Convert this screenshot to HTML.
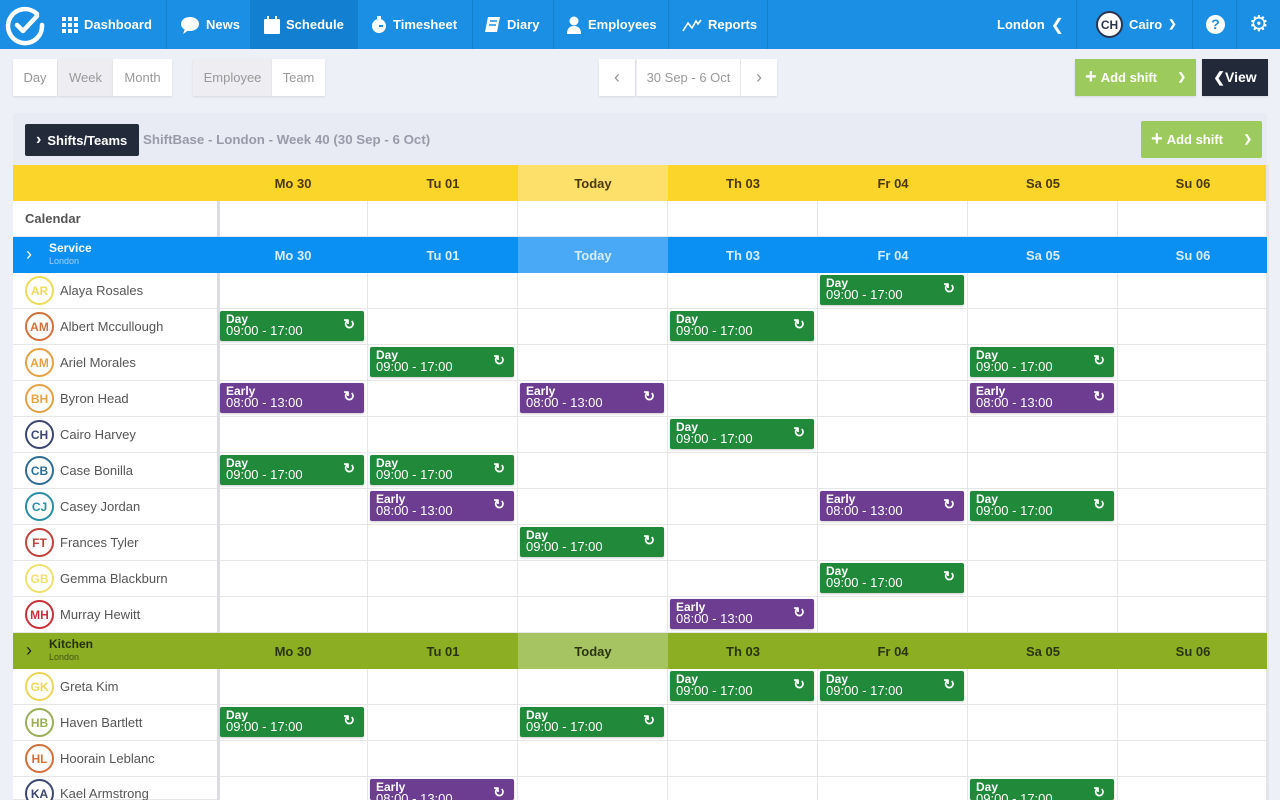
<!DOCTYPE html>
<html style="overflow:hidden;width:1280px;height:800px"><head><meta charset="utf-8">
<style>
*{box-sizing:border-box;margin:0;padding:0}
html,body{overflow:hidden}
body{width:1280px;height:800px;overflow:hidden;background:#eef0f7;font-family:"Liberation Sans",sans-serif;position:relative}
.a{position:absolute}
.nav{left:0;top:0;width:1280px;height:49px;background:#1a8fe3}
.ni{position:absolute;top:0;height:49px;display:flex;align-items:center;color:#fff;font-size:13px;font-weight:bold;gap:6px}
.sep{position:absolute;top:0;width:1px;height:49px;background:#1580d0}
.btn{position:absolute;top:59px;height:37px;background:#fff;display:flex;align-items:center;justify-content:center;color:#999;font-size:13px;box-shadow:0 1px 2px rgba(0,0,0,.1)}
.hd{position:absolute;display:flex;align-items:center;justify-content:center;font-size:13px;font-weight:bold}
.nm{position:absolute;left:13px;width:204px;height:36px;background:#fff;border-bottom:1px solid #e6e6e6;display:flex;align-items:center;padding-left:12px;font-size:13px;color:#555}
.av{width:29px;height:29px;border-radius:50%;border:2px solid;display:flex;align-items:center;justify-content:center;font-size:12px;font-weight:bold;margin-right:6px;background:#fff}
.s{position:absolute;width:144px;height:30px;border-radius:2px;color:#fff;padding:2px 6px;font-size:13px;line-height:12px;box-shadow:0 1px 2px rgba(0,0,0,.2)}
.s b{display:block;font-size:12px}
.s i{position:absolute;right:9px;top:7px;font-style:normal;font-size:14px;font-weight:bold}
.g{background:#218a3a}.p{background:#6d3d92}
</style></head><body>
<div class="a nav"></div>
<svg class="a" style="left:4px;top:4px" width="42" height="42" viewBox="0 0 42 42"><path d="M33 10A17 17 0 1 0 38 21" fill="none" stroke="#fff" stroke-width="4.5" stroke-linecap="round"/><path d="M13 21l6 6 14-15" fill="none" stroke="#fff" stroke-width="4.5" stroke-linecap="round" stroke-linejoin="round"/></svg>
<div class="ni" style="left:62px"><span style="display:inline-grid;grid-template-columns:repeat(3,4px);gap:2px"><i style="background:#fff;height:4px"></i><i style="background:#fff;height:4px"></i><i style="background:#fff;height:4px"></i><i style="background:#fff;height:4px"></i><i style="background:#fff;height:4px"></i><i style="background:#fff;height:4px"></i><i style="background:#fff;height:4px"></i><i style="background:#fff;height:4px"></i><i style="background:#fff;height:4px"></i></span>Dashboard</div>
<div class="sep" style="left:166px"></div>
<div class="ni" style="left:180px"><svg width="20" height="18"><ellipse cx="10" cy="8" rx="9" ry="7" fill="#fff"/><path d="M5 13l-2 5 6-4z" fill="#fff"/></svg>News</div>
<div class="a" style="left:250px;top:0;width:108px;height:49px;background:#137fd1"></div>
<div class="ni" style="left:264px"><svg width="16" height="18"><rect x="0" y="3" width="16" height="15" rx="1" fill="#fff"/><rect x="3" y="0" width="2" height="4" fill="#fff"/><rect x="11" y="0" width="2" height="4" fill="#fff"/></svg>Schedule</div>
<div class="ni" style="left:371px"><svg width="16" height="18"><circle cx="8" cy="10" r="7" fill="#fff"/><rect x="6" y="0" width="4" height="3" fill="#fff"/><path d="M8 10h4" stroke="#1a8fe3" stroke-width="2"/></svg>Timesheet</div>
<div class="sep" style="left:472px"></div>
<div class="ni" style="left:485px"><svg width="16" height="17"><path d="M3 1h12l-3 15H0z" fill="#fff"/><path d="M5 5h7M4 9h7" stroke="#1a8fe3" stroke-width="1.5"/></svg>Diary</div>
<div class="sep" style="left:553px"></div>
<div class="ni" style="left:566px"><svg width="16" height="18"><circle cx="8" cy="5" r="4.5" fill="#fff"/><path d="M1 18c0-6 3-8 7-8s7 2 7 8z" fill="#fff"/></svg>Employees</div>
<div class="sep" style="left:668px"></div>
<div class="ni" style="left:682px"><svg width="20" height="14"><path d="M1 13l5-8 4 5 4-7 2 3 3-4" fill="none" stroke="#fff" stroke-width="1.6"/></svg>Reports</div>
<div class="sep" style="left:767px"></div>
<div class="ni" style="left:997px">London <span style="font-size:16px;font-weight:normal">&#10094;</span></div>
<div class="sep" style="left:1076px"></div>
<div class="ni" style="left:1096px"><span style="width:27px;height:27px;border-radius:50%;background:#fff;border:2px solid #2a3550;color:#2a3550;font-size:12px;display:flex;align-items:center;justify-content:center">CH</span>Cairo <span style="font-size:10px">&#10095;</span></div>
<div class="sep" style="left:1192px"></div>
<div class="a" style="left:1206px;top:15px;width:19px;height:19px;border-radius:50%;background:#fff;color:#1a8fe3;font-size:14px;font-weight:bold;text-align:center;line-height:19px">?</div>
<div class="sep" style="left:1236px"></div>
<div class="a" style="left:1249px;top:13px;color:#fff;font-size:22px;line-height:22px">&#9881;</div>

<div class="btn" style="left:13px;width:44px">Day</div>
<div class="btn" style="left:58px;width:55px;background:#eeeef2">Week</div>
<div class="btn" style="left:113px;width:59px">Month</div>
<div class="btn" style="left:193px;width:79px;background:#eeeef2">Employee</div>
<div class="btn" style="left:272px;width:53px">Team</div>
<div class="btn" style="left:599px;width:36px;font-size:18px">&#8249;</div>
<div class="btn" style="left:636px;width:105px;border-left:1px solid #eee;border-right:1px solid #eee">30 Sep - 6 Oct</div>
<div class="btn" style="left:741px;width:36px;font-size:18px">&#8250;</div>
<div class="btn" style="left:1075px;width:121px;background:#9cca5c;color:#fff;font-weight:bold;justify-content:flex-start;padding-left:10px"><span style="font-size:20px;margin-right:4px">+</span>Add shift<span style="position:absolute;right:10px;font-size:10px">&#10095;</span></div>
<div class="btn" style="left:1202px;width:66px;background:#222a3a;color:#fff;font-weight:bold;font-size:14px">&#10094;View</div>

<div class="a" style="left:13px;top:113px;width:1254px;height:52px;background:#e8ebf4"></div>
<div class="a" style="left:25px;top:124px;width:114px;height:32px;background:#232b3b;border-radius:2px;color:#fff;font-size:13px;font-weight:bold;display:flex;align-items:center;padding-left:11px"><span style="font-size:16px;margin-right:6px">&#8250;</span>Shifts/Teams</div>
<div class="a" style="left:143px;top:132px;font-size:13.3px;color:#9a9aa8;font-weight:bold">ShiftBase - London - Week 40 (30 Sep - 6 Oct)</div>
<div class="a" style="left:1141px;top:121px;width:121px;height:37px;background:#9cca5c;color:#fff;font-size:13px;font-weight:bold;display:flex;align-items:center;padding-left:10px;border-radius:2px"><span style="font-size:20px;margin-right:4px">+</span>Add shift<span style="position:absolute;right:10px;font-size:10px">&#10095;</span></div>

<div class="a" style="left:13px;top:165px;width:1254px;height:36px;background:#fcd52a"></div>
<div class="a" style="left:518px;top:165px;width:150px;height:36px;background:#fde06a"></div>
<div class="hd" style="left:218px;top:165px;width:150px;height:36px;color:#4a3a10">Mo 30</div>
<div class="hd" style="left:368px;top:165px;width:150px;height:36px;color:#4a3a10">Tu 01</div>
<div class="hd" style="left:518px;top:165px;width:150px;height:36px;color:#4a3a10">Today</div>
<div class="hd" style="left:668px;top:165px;width:150px;height:36px;color:#4a3a10">Th 03</div>
<div class="hd" style="left:818px;top:165px;width:150px;height:36px;color:#4a3a10">Fr 04</div>
<div class="hd" style="left:968px;top:165px;width:150px;height:36px;color:#4a3a10">Sa 05</div>
<div class="hd" style="left:1118px;top:165px;width:150px;height:36px;color:#4a3a10">Su 06</div>

<div class="a" style="left:218px;top:201px;width:1049px;height:599px;background:#fff;
background-image:linear-gradient(to right,#e6e6e6 1px,transparent 1px),linear-gradient(to bottom,transparent 35px,#e6e6e6 35px);
background-size:150px 36px;background-position:-1px 0,0 0"></div>
<div class="a" style="left:217px;top:201px;width:3px;height:599px;background:#dcdde2"></div>
<div class="a" style="left:1266px;top:165px;width:3px;height:635px;background:#e4e5ea"></div>
<div class="nm" style="top:201px;font-weight:bold;color:#555">Calendar</div>

<div class="a" style="left:13px;top:237px;width:1254px;height:36px;background:#0a8ff2"></div>
<div class="a" style="left:518px;top:237px;width:150px;height:36px;background:#4aa9f7"></div>
<div class="a" style="left:26px;top:244px;color:#fff;font-size:18px">&#8250;</div>
<div class="a" style="left:49px;top:242px;color:#fff;font-size:12px;font-weight:bold;line-height:12px">Service<br><span style="font-size:9px;font-weight:normal;color:#9fd2fa">London</span></div>
<div class="hd" style="left:218px;top:237px;width:150px;height:36px;color:#d6ecfd">Mo 30</div>
<div class="hd" style="left:368px;top:237px;width:150px;height:36px;color:#d6ecfd">Tu 01</div>
<div class="hd" style="left:518px;top:237px;width:150px;height:36px;color:#d6ecfd">Today</div>
<div class="hd" style="left:668px;top:237px;width:150px;height:36px;color:#d6ecfd">Th 03</div>
<div class="hd" style="left:818px;top:237px;width:150px;height:36px;color:#d6ecfd">Fr 04</div>
<div class="hd" style="left:968px;top:237px;width:150px;height:36px;color:#d6ecfd">Sa 05</div>
<div class="hd" style="left:1118px;top:237px;width:150px;height:36px;color:#d6ecfd">Su 06</div>

<div class="nm" style="top:273px"><span class="av" style="border-color:#ecdc5a;color:#ecdc5a">AR</span>Alaya Rosales</div>
<div class="nm" style="top:309px"><span class="av" style="border-color:#d4713a;color:#d4713a">AM</span>Albert Mccullough</div>
<div class="nm" style="top:345px"><span class="av" style="border-color:#e3a244;color:#e3a244">AM</span>Ariel Morales</div>
<div class="nm" style="top:381px"><span class="av" style="border-color:#e3a244;color:#e3a244">BH</span>Byron Head</div>
<div class="nm" style="top:417px"><span class="av" style="border-color:#3c4670;color:#3c4670">CH</span>Cairo Harvey</div>
<div class="nm" style="top:453px"><span class="av" style="border-color:#2f6e94;color:#2f6e94">CB</span>Case Bonilla</div>
<div class="nm" style="top:489px"><span class="av" style="border-color:#2a8ea6;color:#2a8ea6">CJ</span>Casey Jordan</div>
<div class="nm" style="top:525px"><span class="av" style="border-color:#c0423a;color:#c0423a">FT</span>Frances Tyler</div>
<div class="nm" style="top:561px"><span class="av" style="border-color:#f0e070;color:#f0e070">GB</span>Gemma Blackburn</div>
<div class="nm" style="top:597px"><span class="av" style="border-color:#c8303a;color:#c8303a">MH</span>Murray Hewitt</div>

<div class="a" style="left:13px;top:633px;width:1254px;height:36px;background:#8cae23"></div>
<div class="a" style="left:518px;top:633px;width:150px;height:36px;background:#a6c462"></div>
<div class="a" style="left:26px;top:640px;color:#222;font-size:18px">&#8250;</div>
<div class="a" style="left:49px;top:638px;color:#23300a;font-size:12px;font-weight:bold;line-height:12px">Kitchen<br><span style="font-size:9px;font-weight:normal;color:#44551a">London</span></div>
<div class="hd" style="left:218px;top:633px;width:150px;height:36px;color:#2a3510">Mo 30</div>
<div class="hd" style="left:368px;top:633px;width:150px;height:36px;color:#2a3510">Tu 01</div>
<div class="hd" style="left:518px;top:633px;width:150px;height:36px;color:#2a3510">Today</div>
<div class="hd" style="left:668px;top:633px;width:150px;height:36px;color:#2a3510">Th 03</div>
<div class="hd" style="left:818px;top:633px;width:150px;height:36px;color:#2a3510">Fr 04</div>
<div class="hd" style="left:968px;top:633px;width:150px;height:36px;color:#2a3510">Sa 05</div>
<div class="hd" style="left:1118px;top:633px;width:150px;height:36px;color:#2a3510">Su 06</div>

<div class="nm" style="top:669px"><span class="av" style="border-color:#ecd65a;color:#ecd65a">GK</span>Greta Kim</div>
<div class="nm" style="top:705px"><span class="av" style="border-color:#9aae5a;color:#9aae5a">HB</span>Haven Bartlett</div>
<div class="nm" style="top:741px"><span class="av" style="border-color:#d4713a;color:#d4713a">HL</span>Hoorain Leblanc</div>
<div class="nm" style="top:777px;height:23px;align-items:flex-start;padding-top:2px"><span class="av" style="border-color:#3c4670;color:#3c4670">KA</span><span style="margin-top:7px">Kael Armstrong</span></div>

<div class="s g" style="left:820px;top:275px"><b>Day</b>09:00 - 17:00<i>&#8635;</i></div>
<div class="s g" style="left:220px;top:311px"><b>Day</b>09:00 - 17:00<i>&#8635;</i></div>
<div class="s g" style="left:670px;top:311px"><b>Day</b>09:00 - 17:00<i>&#8635;</i></div>
<div class="s g" style="left:370px;top:347px"><b>Day</b>09:00 - 17:00<i>&#8635;</i></div>
<div class="s g" style="left:970px;top:347px"><b>Day</b>09:00 - 17:00<i>&#8635;</i></div>
<div class="s p" style="left:220px;top:383px"><b>Early</b>08:00 - 13:00<i>&#8635;</i></div>
<div class="s p" style="left:520px;top:383px"><b>Early</b>08:00 - 13:00<i>&#8635;</i></div>
<div class="s p" style="left:970px;top:383px"><b>Early</b>08:00 - 13:00<i>&#8635;</i></div>
<div class="s g" style="left:670px;top:419px"><b>Day</b>09:00 - 17:00<i>&#8635;</i></div>
<div class="s g" style="left:220px;top:455px"><b>Day</b>09:00 - 17:00<i>&#8635;</i></div>
<div class="s g" style="left:370px;top:455px"><b>Day</b>09:00 - 17:00<i>&#8635;</i></div>
<div class="s p" style="left:370px;top:491px"><b>Early</b>08:00 - 13:00<i>&#8635;</i></div>
<div class="s p" style="left:820px;top:491px"><b>Early</b>08:00 - 13:00<i>&#8635;</i></div>
<div class="s g" style="left:970px;top:491px"><b>Day</b>09:00 - 17:00<i>&#8635;</i></div>
<div class="s g" style="left:520px;top:527px"><b>Day</b>09:00 - 17:00<i>&#8635;</i></div>
<div class="s g" style="left:820px;top:563px"><b>Day</b>09:00 - 17:00<i>&#8635;</i></div>
<div class="s p" style="left:670px;top:599px"><b>Early</b>08:00 - 13:00<i>&#8635;</i></div>
<div class="s g" style="left:670px;top:671px"><b>Day</b>09:00 - 17:00<i>&#8635;</i></div>
<div class="s g" style="left:820px;top:671px"><b>Day</b>09:00 - 17:00<i>&#8635;</i></div>
<div class="s g" style="left:220px;top:707px"><b>Day</b>09:00 - 17:00<i>&#8635;</i></div>
<div class="s g" style="left:520px;top:707px"><b>Day</b>09:00 - 17:00<i>&#8635;</i></div>
<div class="s p" style="left:370px;top:779px;height:21px"><b>Early</b>08:00 - 13:00<i>&#8635;</i></div>
<div class="s g" style="left:970px;top:779px;height:21px"><b>Day</b>09:00 - 17:00<i>&#8635;</i></div>
</body></html>
